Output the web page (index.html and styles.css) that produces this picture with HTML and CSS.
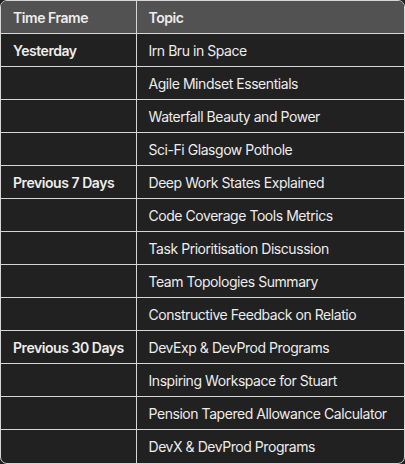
FILE: index.html
```html
<!DOCTYPE html>
<html>
<head>
<meta charset="utf-8">
<link rel="stylesheet" href="styles.css">
</head>
<body>
<div class="frame">
<table class="history">
<thead>
<tr><th class="col-time">Time Frame</th><th>Topic</th></tr>
</thead>
<tbody>
<tr><td class="group">Yesterday</td><td>Irn Bru in Space</td></tr>
<tr><td></td><td>Agile Mindset Essentials</td></tr>
<tr><td></td><td>Waterfall Beauty and Power</td></tr>
<tr><td></td><td>Sci-Fi Glasgow Pothole</td></tr>
<tr><td class="group">Previous 7 Days</td><td>Deep Work States Explained</td></tr>
<tr><td></td><td>Code Coverage Tools Metrics</td></tr>
<tr><td></td><td>Task Prioritisation Discussion</td></tr>
<tr><td></td><td>Team Topologies Summary</td></tr>
<tr><td></td><td>Constructive Feedback on Relatio</td></tr>
<tr><td class="group">Previous 30 Days</td><td>DevExp &amp; DevProd Programs</td></tr>
<tr><td></td><td>Inspiring Workspace for Stuart</td></tr>
<tr><td></td><td>Pension Tapered Allowance Calculator</td></tr>
<tr><td></td><td>DevX &amp; DevProd Programs</td></tr>
</tbody>
</table>
</div>
</body>
</html>
```
FILE: styles.css
```css
html, body {
  margin: 0;
  padding: 0;
  background: #212121;
}
body {
  font-family: Inter, "Noto Sans", sans-serif;
  font-size: 14px;
  letter-spacing: -0.45px;
  color: #ececec;
}
.frame {
  width: 405px;
  box-sizing: border-box;
  border: 1px solid #d6d6d6;
  border-radius: 7px;
  overflow: hidden;
  background: #212121;
}
.history {
  width: 100%;
  border-collapse: collapse;
  table-layout: fixed;
}
.history th, .history td {
  height: 32px;
  padding: 1px 12px 0;
  text-align: left;
  white-space: nowrap;
  overflow: hidden;
  line-height: 31px;
  box-sizing: border-box;
}
.history th {
  background: #525252;
  font-weight: 600;
  color: #ececec;
}
.history .col-time {
  width: 135px;
}
.history tbody td {
  border-top: 1px solid #d6d6d6;
  height: 33px;
}
.history td + td, .history th + th {
  border-left: 1px solid #d6d6d6;
}
.history .group {
  font-weight: 600;
}
```
